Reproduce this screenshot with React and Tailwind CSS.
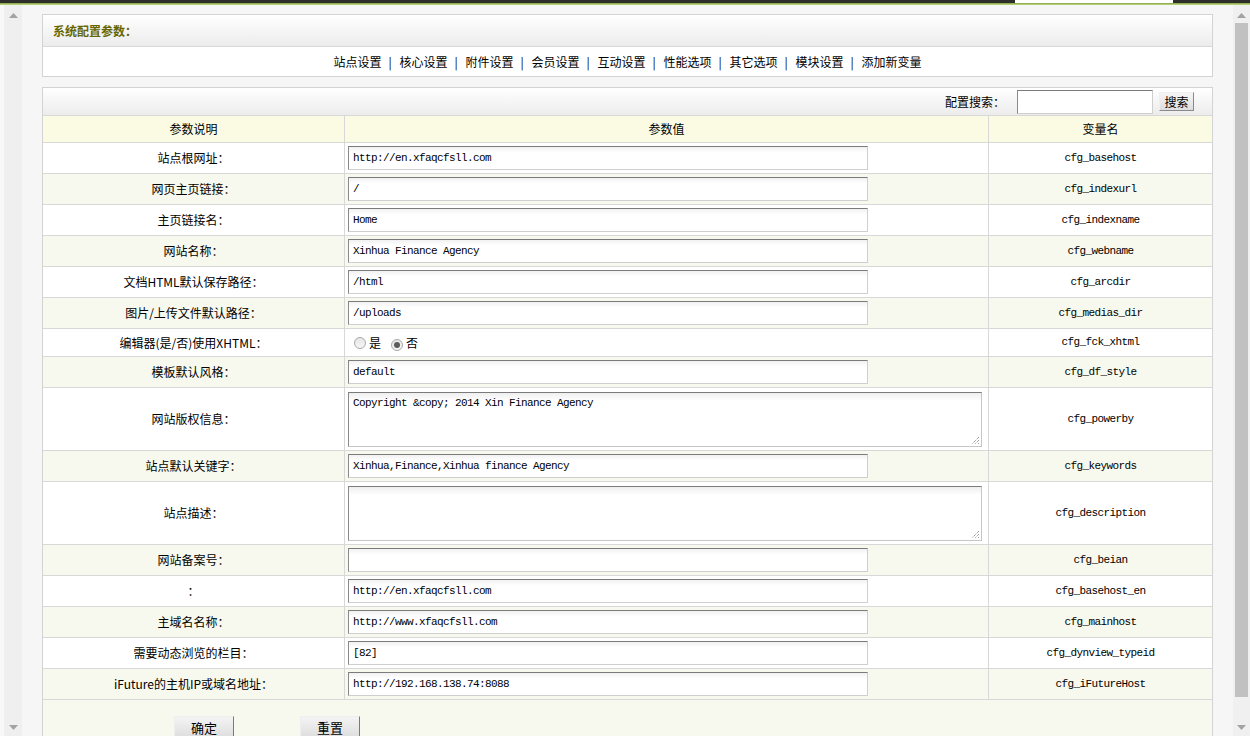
import React from "react";

const CJK = { fontFamily: '"Noto Sans CJK SC", "Noto Sans", sans-serif' };
const MONO = { fontFamily: '"Liberation Mono", "Noto Sans CJK SC", monospace' };

const rows = [
  { label: "站点根网址：", value: "http://en.xfaqcfsll.com", name: "cfg_basehost" },
  { label: "网页主页链接：", value: "/", name: "cfg_indexurl" },
  { label: "主页链接名：", value: "Home", name: "cfg_indexname" },
  { label: "网站名称：", value: "Xinhua Finance Agency", name: "cfg_webname" },
  { label: "文档HTML默认保存路径：", value: "/html", name: "cfg_arcdir" },
  { label: "图片/上传文件默认路径：", value: "/uploads", name: "cfg_medias_dir" },
  { label: "编辑器(是/否)使用XHTML：", type: "radio", name: "cfg_fck_xhtml" },
  { label: "模板默认风格：", value: "default", name: "cfg_df_style" },
  { label: "网站版权信息：", type: "textarea", value: "Copyright &copy; 2014 Xin Finance Agency", name: "cfg_powerby" },
  { label: "站点默认关键字：", value: "Xinhua,Finance,Xinhua finance Agency", name: "cfg_keywords" },
  { label: "站点描述：", type: "textarea", value: "", name: "cfg_description" },
  { label: "网站备案号：", value: "", name: "cfg_beian" },
  { label: "：", value: "http://en.xfaqcfsll.com", name: "cfg_basehost_en" },
  { label: "主域名名称：", value: "http://www.xfaqcfsll.com", name: "cfg_mainhost" },
  { label: "需要动态浏览的栏目：", value: "[82]", name: "cfg_dynview_typeid" },
  { label: "iFuture的主机IP或域名地址：", value: "http://192.168.138.74:8088", name: "cfg_iFutureHost" },
];

const navItems = ["站点设置", "核心设置", "附件设置", "会员设置", "互动设置", "性能选项", "其它选项", "模块设置", "添加新变量"];

function Up() {
  return (
    <svg width="9" height="5" viewBox="0 0 9 5"><path d="M0 5 L4.5 0 L9 5 Z" fill="#a3a3a3" /></svg>
  );
}
function Down() {
  return (
    <svg width="9" height="5" viewBox="0 0 9 5"><path d="M0 0 L4.5 5 L9 0 Z" fill="#a3a3a3" /></svg>
  );
}

function TextBox({ value }) {
  return (
    <div
      className="w-[520px] h-[24px] flex items-center pl-[4px] bg-gradient-to-b from-[#f1f1f1] to-white to-[25%] border border-t-[#7b7b7b] border-l-[#8a8a8a] border-r-[#cfcfcf] border-b-[#cfcfcf] text-[11px] tracking-[-0.6px] text-black whitespace-pre"
      style={MONO}
    >
      {value}
    </div>
  );
}

function TextArea({ value }) {
  return (
    <div className="relative w-[634px] h-[55px] bg-gradient-to-b from-[#efefef] to-white to-[15%] border border-t-[#7b7b7b] border-l-[#8a8a8a] border-r-[#c6c6c6] border-b-[#c6c6c6] pl-[4px] pt-[2px] text-[11px] tracking-[-0.6px] text-black whitespace-pre" style={MONO}>
      {value}
      <svg className="absolute right-[1px] bottom-[1px]" width="9" height="9" viewBox="0 0 9 9">
        <path d="M8 1 L1 8 M8 4 L4 8 M8 7 L7 8" stroke="#777" strokeWidth="1" strokeDasharray="1 1" />
      </svg>
    </div>
  );
}

function Radio({ checked }) {
  return (
    <span className="inline-flex items-center justify-center w-[12px] h-[12px] rounded-full border border-[#a9a9a9] bg-gradient-to-b from-[#e6e6e6] to-[#f6f6f6]">
      {checked && <span className="w-[6px] h-[6px] rounded-full bg-[#5c5c5c]" />}
    </span>
  );
}

export default function App() {
  return (
    <div className="w-[1250px] h-[736px] overflow-hidden flex flex-col bg-[#f6f6f6] text-[12px] text-black" style={CJK}>
      {/* top strip */}
      <div className="h-[5px] flex flex-col shrink-0">
        <div className="h-[3px] bg-[#2e2e2a] flex">
          <div className="ml-[1015px] w-[158px] h-[3px] bg-white" />
        </div>
        <div className="h-[2px] bg-gradient-to-b from-[#7fa33a] to-[#c7dc8c]" />
      </div>

      <div className="flex flex-1 min-h-0">
        {/* left scrollbar */}
        <div className="w-[4px] bg-[#f8f8f8] shrink-0" />
        <div className="w-[18px] bg-[#efefef] shrink-0 flex flex-col items-center justify-between pt-[8px] pb-[6px]">
          <Up />
          <Down />
        </div>

        {/* main */}
        <div className="flex-1 pl-[20px] pr-[20px] pt-[9px] flex flex-col gap-[10px]">
          {/* card 1 */}
          <div className="border border-[#d3d3d3] bg-white">
            <div className="h-[32px] bg-gradient-to-b from-white to-[#ececec] border-b border-[#d8d8d8] flex items-center pl-[10px]">
              <span className="font-bold text-[#666600] text-[12px]">系统配置参数：</span>
            </div>
            <div className="h-[29px] flex items-center justify-center text-[12px]">
              {navItems.map((n, i) => (
                <React.Fragment key={n}>
                  {i > 0 && <span className="ml-[7px] mr-[8px] w-[3px] text-center">|</span>}
                  <span>{n}</span>
                </React.Fragment>
              ))}
            </div>
          </div>

          {/* card 2 */}
          <div className="border border-[#d3d3d3] bg-white flex-1 flex flex-col">
            <div className="h-[28px] bg-gradient-to-b from-white to-[#ececec] border-b border-[#d8d8d8] flex items-center justify-end pr-[18px]">
              <span className="mr-[12px]">配置搜索：</span>
              <div className="w-[136px] h-[24px] bg-white border border-t-[#7b7b7b] border-l-[#8a8a8a] border-r-[#cfcfcf] border-b-[#cfcfcf]" />
              <div className="ml-[6px] w-[35px] h-[19px] flex items-center justify-center bg-gradient-to-b from-[#f6f6f6] to-[#dedede] border border-t-[#f0f0f0] border-l-[#f0f0f0] border-r-[#8a8a8a] border-b-[#8a8a8a]">
                搜索
              </div>
            </div>

            {/* header row */}
            <div className="flex h-[27px] bg-[#fbfbe4] border-b border-[#d8d8d8]">
              <div className="w-[302px] flex items-center justify-center border-r border-[#d8d8d8]">参数说明</div>
              <div className="w-[644px] flex items-center justify-center border-r border-[#d8d8d8]">参数值</div>
              <div className="flex-1 flex items-center justify-center">变量名</div>
            </div>

            {rows.map((r, i) => {
              const h = r.type === "textarea" ? "h-[63px]" : r.type === "radio" ? "h-[28px]" : "h-[31px]";
              const bg = i % 2 === 0 ? "bg-white" : "bg-[#f8f9ee]";
              return (
                <div key={r.name} className={`flex ${h} ${bg} border-b border-[#d8d8d8]`}>
                  <div className="w-[302px] flex items-center justify-center border-r border-[#d8d8d8] whitespace-nowrap">
                    {r.label}
                  </div>
                  <div className="w-[644px] flex items-center pl-[3px] border-r border-[#d8d8d8]">
                    {r.type === "radio" ? (
                      <div className="flex items-center pl-[6px]">
                        <Radio />
                        <span className="ml-[3px]">是</span>
                        <span className="ml-[10px]"><Radio checked /></span>
                        <span className="ml-[3px]">否</span>
                      </div>
                    ) : r.type === "textarea" ? (
                      <TextArea value={r.value} />
                    ) : (
                      <TextBox value={r.value} />
                    )}
                  </div>
                  <div className="flex-1 flex items-center justify-center text-[11px] tracking-[-0.6px]" style={MONO}>
                    {r.name}
                  </div>
                </div>
              );
            })}

            <div className="flex-1 bg-[#f8f9ee] flex items-start pl-[131px] pt-[16px]">
              <div className="w-[60px] h-[24px] flex items-center justify-center bg-gradient-to-b from-[#f4f4f4] to-[#dcdcdc] border border-t-[#eeeeee] border-l-[#eeeeee] border-r-[#7a7a7a] border-b-[#7a7a7a] text-[13px]">
                确定
              </div>
              <div className="ml-[66px] w-[60px] h-[24px] flex items-center justify-center bg-gradient-to-b from-[#f4f4f4] to-[#dcdcdc] border border-t-[#eeeeee] border-l-[#eeeeee] border-r-[#7a7a7a] border-b-[#7a7a7a] text-[13px]">
                重置
              </div>
            </div>
          </div>
        </div>

        {/* right scrollbar */}
        <div className="w-[17px] bg-[#f0f0f0] shrink-0 flex flex-col items-center pt-[8px] pb-[6px]">
          <Up />
          <div className="w-[13px] bg-[#c1c1c1] mt-[5px] h-[674px]" />
          <div className="flex-1" />
          <Down />
        </div>
      </div>
    </div>
  );
}
